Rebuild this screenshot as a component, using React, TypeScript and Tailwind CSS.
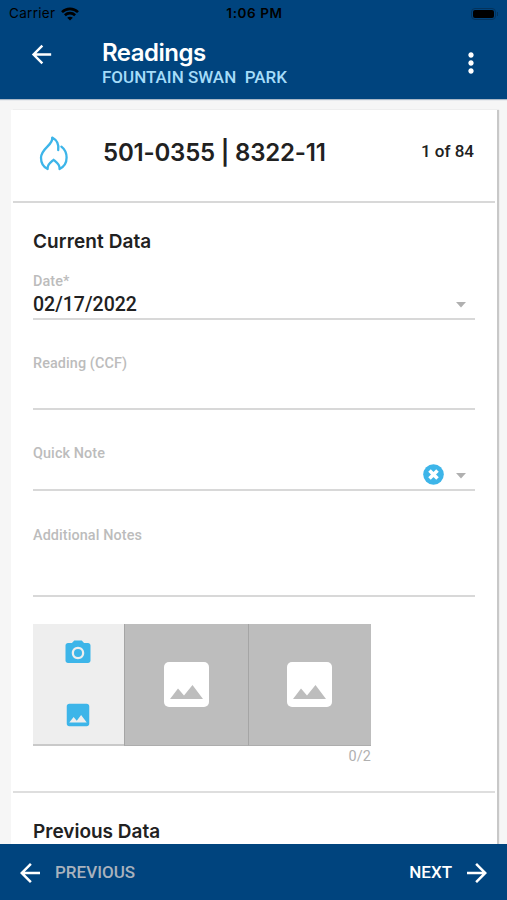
import { ReactNode } from "react";
import { MdArrowBack, MdArrowForward, MdCameraAlt, MdImage, MdMoreVert } from "react-icons/md";

const images = [1, 2];

const FlameIcon = () => (
  <svg
    className="mb-[3px] h-9 w-[30px]"
    viewBox="0 0 30 36"
    fill="none"
    stroke="#3db5e9"
    strokeWidth="2.3"
    strokeLinejoin="round"
    strokeLinecap="round"
  >
    <path d="M19.2 14C20 8.6 17.6 4 13.2 1.6C14.6 9 2 12 2 21.8C2 27 4.4 31 8.6 33C8.4 29 10.4 27.6 14.6 23.8C18.8 27.6 20.8 29 20.6 33C24.8 31 27.6 26.6 27.6 21.6C27.6 17.4 25.8 13.2 22.4 10.6" />
  </svg>
);

const Caret = () => (
  <svg className="mt-px h-[6px] w-[10px]" viewBox="0 0 10 6">
    <path d="M0 0H10L5 5.6Z" fill="#b0b0b0" />
  </svg>
);

type FieldProps = { label: string; className: string; children?: ReactNode };

const Field = ({ label, className, children }: FieldProps) => (
  <div className={`mx-[22px] flex flex-col border-[#d8d8d8] ${className}`}>
    <label className="text-[14.4px] leading-[18px] font-medium tracking-[0.1px] text-[#bcbcbc]">{label}</label>
    {children}
  </div>
);

const App = () => {
  return (
    <div className="flex h-[900px] w-[507px] flex-col overflow-hidden bg-[#f6f6f6] font-['Roboto',sans-serif] text-[#212121]">
      {/* HEADER */}
      <header className="z-10 h-[99px] shrink-0 bg-[#00447e] shadow-[0_1px_1px_#a9b8c7]">
        <div className="grid h-[27px] grid-cols-3 items-center pr-[9px] pl-[9px] font-['Inter',sans-serif] text-[13.5px] text-black">
          <div className="flex items-center gap-[6px]">
            <span className="tracking-[0.3px]">Carrier</span>
            <svg className="h-[14px] w-[18px]" viewBox="0 0 18 14" fill="none" stroke="black" strokeWidth="2.6">
              <path d="M1 5.2C5.5 .7 12.5 .7 17 5.2M3.9 8.2C6.8 5.4 11.2 5.4 14.1 8.2" />
              <path d="M9 13.6L6.2 10.8C7.8 9.3 10.2 9.3 11.8 10.8Z" fill="black" stroke="none" />
            </svg>
          </div>
          <span className="pl-[2px] text-center font-semibold tracking-[0.6px]">1:06 PM</span>
          <div className="flex items-center justify-end">
            <div className="h-[12px] w-[25px] rounded-[4px] border border-[#04335c] p-px">
              <div className="h-full rounded-[2px] bg-black" />
            </div>
            <div className="ml-px h-1 w-px bg-[#04335c]" />
          </div>
        </div>
        <div className="flex h-[72px] pl-[27px] text-white">
          <MdArrowBack className="mt-[13px] size-[29px]" />
          <div className="ml-[46px] flex-1 pt-[11px]">
            <h1 className="font-['Inter',sans-serif] text-[24px] leading-[29px] font-semibold tracking-[-0.5px]">Readings</h1>
            <p className="text-[17px] leading-[20px] font-medium whitespace-pre text-[#a5dcf9]">FOUNTAIN SWAN  PARK</p>
          </div>
          <MdMoreVert className="mt-[20px] mr-[20px] size-8" />
        </div>
      </header>

      {/* READING CARD */}
      <main className="mt-[11px] mr-[10px] ml-[11px] flex-1 overflow-hidden bg-white shadow-[2px_0_1px_#c8c8c8]">
        <div className="mr-[2px] ml-[2px] flex h-[93px] items-center border-b-2 border-[#d8d8d8] pr-[21px] pl-[26px]">
          <FlameIcon />
          <h2 className="ml-[34px] flex-1 pb-[6px] font-['Inter',sans-serif] text-[24px] font-semibold tracking-[-0.2px]">
            501-0355 | 8322-11
          </h2>
          <span className="pb-[8px] text-[17px] font-medium">1 of 84</span>
        </div>

        <h3 className="mt-[26px] ml-[22px] font-['Inter',sans-serif] text-[19px] leading-[26px] font-semibold tracking-[0.1px]">
          Current Data
        </h3>

        <Field label="Date*" className="mt-[18px] h-[47px] border-b-2">
          <div className="flex h-[27px] items-center justify-between pr-[9px]">
            <span className="text-[19.5px] font-medium">02/17/2022</span>
            <Caret />
          </div>
        </Field>
        <Field label="Reading (CCF)" className="mt-[35px] h-[55px] border-b-2" />
        <Field label="Quick Note" className="mt-[35px] h-[46px] border-b-2">
          <div className="flex items-center justify-end gap-3 pt-px pr-[9px]">
            <svg className="size-[21px]" viewBox="0 0 21 21">
              <circle cx="10.5" cy="10.5" r="10.3" fill="#3db5e9" />
              <path d="M6.5 6.5L14.5 14.5M14.5 6.5L6.5 14.5" stroke="white" strokeWidth="3.6" />
            </svg>
            <div className="pt-[2px]">
              <Caret />
            </div>
          </div>
        </Field>
        <Field label="Additional Notes" className="mt-[36px] h-[70px] border-b-2" />

        {/* IMAGES */}
        <div className="mt-[27px] ml-[22px] w-[338px]">
          <div className="flex h-[122px]">
            <div className="flex w-[91px] flex-col items-center border-b-2 border-[#c9c9c9] bg-[#eee] pr-px text-[#3db5e9]">
              <MdCameraAlt className="mt-[14px] size-[30px]" />
              <MdImage className="mt-[32px] size-[30px]" />
            </div>
            {images.map((image) => (
              <div
                key={image}
                className="flex flex-1 items-center justify-center border-b border-l border-b-[#adadad] border-l-[#a5a5a5] bg-[#bdbdbd]"
              >
                <svg className="size-[45px]" viewBox="0 0 45 45">
                  <rect width="45" height="45" rx="5" fill="white" />
                  <path d="M6 37L14 26.5L20 33.5L28.5 23L39 37Z" fill="#bdbdbd" />
                </svg>
              </div>
            ))}
          </div>
          <p className="pt-[2px] text-right text-[14.4px] leading-[17px] tracking-[0.1px] text-[#b0b0b0]">0/2</p>
        </div>

        <div className="mt-[26px] mr-[2px] ml-[2px] h-[2px] bg-[#dedede]" />
        <h3 className="mt-[26px] ml-[22px] font-['Inter',sans-serif] text-[19px] leading-[26px] font-semibold">
          Previous Data
        </h3>
      </main>

      {/* FOOTER */}
      <footer className="z-10 flex h-[56px] shrink-0 items-center justify-between bg-[#00447e] px-[15px] text-[17px] font-medium text-white">
        <button className="flex items-center gap-[10px]">
          <MdArrowBack className="mt-[2px] size-[30px]" />
          <span className="pt-[2px] text-[#a9b2bd]">PREVIOUS</span>
        </button>
        <button className="flex items-center gap-[10px]">
          <span className="pt-[2px]">NEXT</span>
          <MdArrowForward className="mt-[2px] size-[30px]" />
        </button>
      </footer>
    </div>
  );
};

export default App;
